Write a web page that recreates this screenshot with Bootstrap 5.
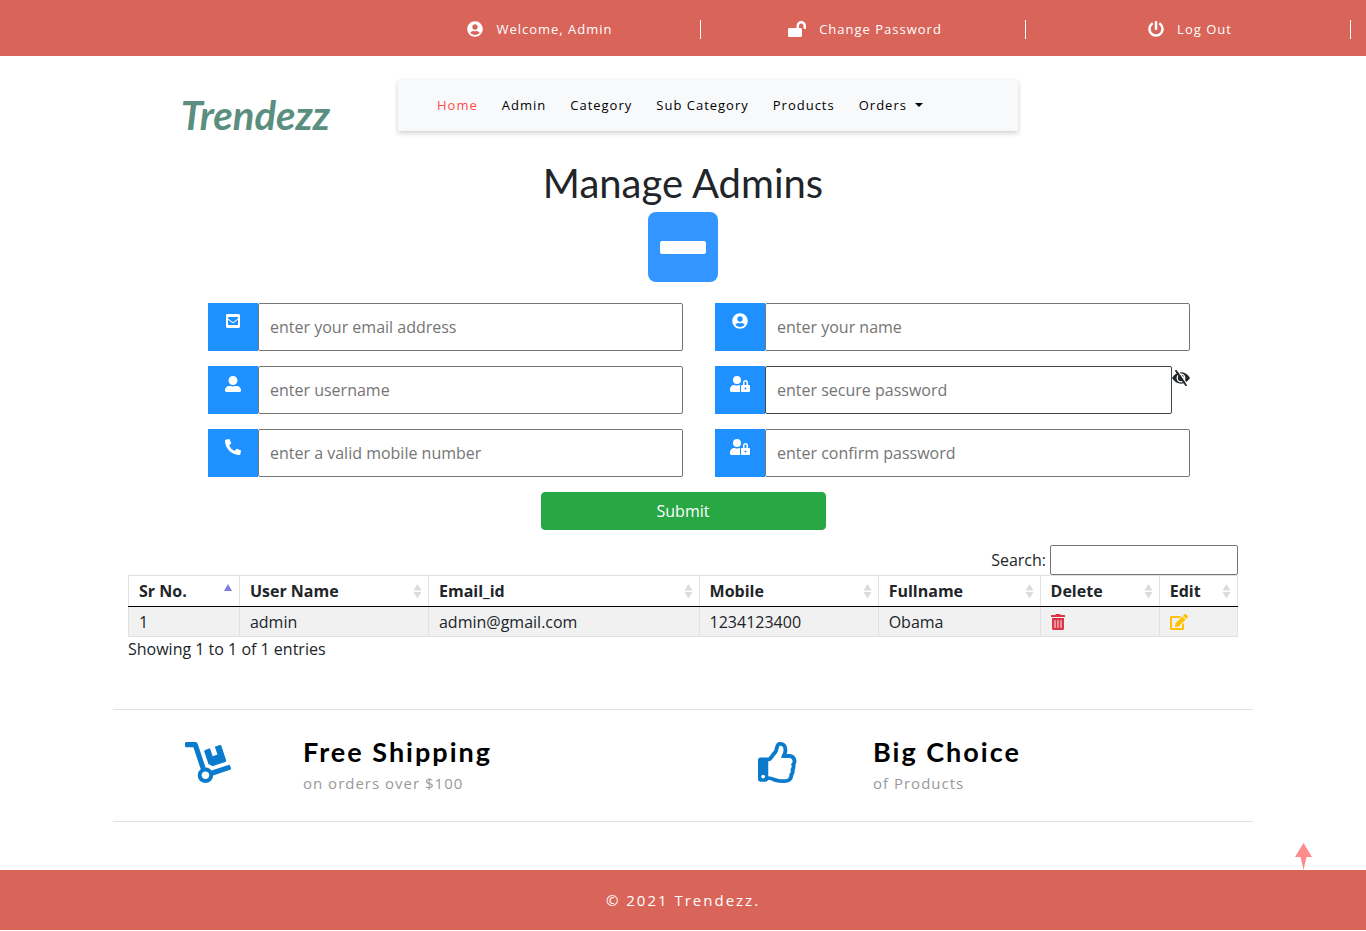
<!DOCTYPE html>
<html lang="en">
<head>
<meta charset="utf-8">
<meta name="viewport" content="width=device-width, initial-scale=1">
<title>Trendezz - Manage Admins</title>
<link rel="stylesheet" href="https://cdn.jsdelivr.net/npm/bootstrap@5.3.0/dist/css/bootstrap.min.css">
<style>
  body { font-family: "Open Sans", sans-serif; font-size: 16px; color: #212529; background: #fff; }
  h1, h2, .brand { font-family: Lato, sans-serif; }
  svg { fill: currentColor; display: block; flex: none; }
  .strip { background: #d96459; }
  .top-strip { padding: 20px 15px 17px 51px; }
  .top-strip .cell { height: 19px; padding-left: 4px; border-right: 1px solid #fff; }
  .top-strip a { font-size: 13px; letter-spacing: 1px; line-height: 19px; font-weight: 500; gap: 13px; }
  .top-strip svg { margin-bottom: 2px; }
  .site-head { margin-top: 24px; }
  .brand { font-size: 40px; font-weight: 700; font-style: italic; line-height: 48px; color: #5a8f80; padding-top: 11px; }
  .menu { max-width: 620px; height: 51px; padding: 0 27px; box-shadow: 0 2px 5px rgba(0,0,0,.2); }
  .menu .nav-link { font-size: 13px; letter-spacing: 1px; color: #000; padding: 0 12px; line-height: 51px; }
  .menu .nav-link.active { color: #ff4c4c; }
  .menu .dropdown-toggle::after { margin-left: 8px; border-width: 4px 4px 0; }
  h1 { font-size: 40px; font-weight: 400; line-height: 48px; margin: 20px 0 5px; }
  .fold { width: 70px; height: 70px; border: 0; border-radius: 8px; background: #3395ff; color: #fff; }
  .admin-form { padding: 21px 63px 0 95px; }
  .admin-form .row { --bs-gutter-x: 32px; --bs-gutter-y: 15px; }
  .tag { width: 50px; height: 48px; padding-top: 10px; background: #1e90ff; color: #fff; }
  .field { height: 48px; min-width: 0; border: 1px solid #767676; border-radius: 2px; padding: 0 11px; }
  .field::placeholder { color: #757575; }
  .field-dark { border-color: #444; }
  .eye { border: 0; background: none; padding: 4px 0 0; color: #212529; }
  .submit { background: #28a745; border-color: #28a745; border-radius: 4px; margin-top: 15px; font-weight: 500; }
  .records { padding: 15px 15px 0; }
  .find { width: 188px; height: 30px; border: 1px solid #767676; border-radius: 2px; }
  .records table { border-collapse: collapse; }
  .records th, .records td { padding: 3px 10px; line-height: 24px; border: 1px solid #dee2e6; }
  .records thead th { border-bottom-color: #000; }
  .records tbody td { background: #f1f1f1; padding-bottom: 2px; }
  .arrows { color: #dcdcdc; margin-right: -5px; }
  .features { margin-top: 48px; border-top: 1px solid #dee2e6; border-bottom: 1px solid #dee2e6; height: 113px; }
  .features .perk { padding-bottom: 2px; }
  .features svg { color: #0a7bcc; margin: 0 auto 4px; }
  .features h2 { font-size: 27px; font-weight: 700; letter-spacing: 2px; line-height: 34px; color: #000; margin: 0; }
  .features p { font-size: 15px; letter-spacing: 1px; line-height: 24px; color: #999; margin: 2px 0 0; }
  .foot { margin-top: 48px; height: 60px; color: #fff; letter-spacing: 2px; font-size: 15px; font-weight: 500; }
  .to-top { right: 54px; bottom: 100%; color: #ff8c8c; }
</style>
</head>
<body>
<header>
  <div class="strip top-strip">
    <div class="row g-0">
      <div class="col-3 offset-3 cell d-flex justify-content-center"><a href="#" class="d-flex align-items-center text-white text-decoration-none"><svg width="16" height="16" viewBox="0 0 496 512"><path d="M248 8C111 8 0 119 0 256s111 248 248 248 248-111 248-248S385 8 248 8zm0 96c48.6 0 88 39.4 88 88s-39.4 88-88 88-88-39.4-88-88 39.4-88 88-88zm0 344c-58.7 0-111.3-26.6-146.5-68.2 18.8-35.4 55.6-59.8 98.5-59.8 2.4 0 4.8.4 7.1 1.1 13 4.2 26.6 6.9 40.9 6.9 14.3 0 28-2.7 40.9-6.9 2.3-.7 4.7-1.1 7.1-1.1 42.9 0 79.7 24.4 98.5 59.8C359.3 421.4 306.7 448 248 448z"/></svg>Welcome, Admin</a></div>
      <div class="col-3 cell d-flex justify-content-center"><a href="#" class="d-flex align-items-center text-white text-decoration-none"><svg width="18" height="16" viewBox="0 0 576 512"><path d="M423.500 0C339.500.3 272 69.500 272 153.500V224H48c-26.500 0-48 21.500-48 48v192c0 26.500 21.500 48 48 48h352c26.500 0 48-21.500 48-48V272c0-26.500-21.500-48-48-48h-48v-71.100c0-39.600 31.700-72.500 71.300-72.900 40-.4 72.700 32.100 72.700 72v80c0 13.300 10.700 24 24 24h32c13.300 0 24-10.700 24-24v-80C576 68 507.500-.3 423.500 0z"/></svg>Change Password</a></div>
      <div class="col-3 cell d-flex justify-content-center"><a href="#" class="d-flex align-items-center text-white text-decoration-none"><svg width="16" height="16" viewBox="0 0 512 512"><path d="M400 54.1c63 45 104 118.6 104 201.9 0 136.8-110.8 247.7-247.5 248C120 504.3 8.2 393 8 256.4 7.9 173.1 48.9 99.3 111.8 54.2c11.7-8.3 28-4.8 35 7.7L162.6 90c5.9 10.5 3.1 23.8-6.6 31-41.5 30.800-68 79.600-68 134.900-.1 92.300 74.500 168.100 168 168.100 91.600 0 168.600-74.200 168-169.100-.3-51.800-24.700-101.800-68.100-134-9.700-7.200-12.400-20.500-6.500-30.900l15.800-28.100c7-12.400 23.200-16.100 34.800-7.800zM296 264V24c0-13.300-10.700-24-24-24h-32c-13.300 0-24 10.700-24 24v240c0 13.300 10.700 24 24 24h32c13.300 0 24-10.700 24-24z"/></svg>Log Out</a></div>
    </div>
  </div>
  <div class="container p-0 site-head">
    <div class="row g-0">
      <div class="col-3 text-center"><a href="#" class="brand d-inline-block text-decoration-none">Trendezz</a></div>
      <div class="col-9">
        <nav class="menu bg-light d-flex" aria-label="Main">
          <ul class="nav flex-nowrap">
            <li class="nav-item"><a class="nav-link active" href="#">Home</a></li>
            <li class="nav-item"><a class="nav-link" href="#">Admin</a></li>
            <li class="nav-item"><a class="nav-link" href="#">Category</a></li>
            <li class="nav-item"><a class="nav-link text-nowrap" href="#">Sub Category</a></li>
            <li class="nav-item"><a class="nav-link" href="#">Products</a></li>
            <li class="nav-item dropdown"><a class="nav-link dropdown-toggle" href="#" role="button" data-bs-toggle="dropdown">Orders</a></li>
          </ul>
        </nav>
      </div>
    </div>
  </div>
</header>

<main class="container p-0">
  <h1 class="text-center">Manage Admins</h1>
  <button type="button" class="fold d-flex align-items-center justify-content-center mx-auto p-0" aria-label="Collapse form"><svg width="46" height="13" viewBox="0 0 46 13"><rect width="46" height="13" rx="2"/></svg></button>

  <form>
    <div class="admin-form">
      <div class="row">
        <div class="col-6 d-flex"><label class="tag d-flex justify-content-center" for="email" aria-label="Email"><svg width="14" height="16" viewBox="0 0 448 512"><path d="M400 32H48C21.49 32 0 53.49 0 80v352c0 26.51 21.49 48 48 48h352c26.51 0 48-21.49 48-48V80c0-26.51-21.49-48-48-48zM178.117 262.104C87.429 196.287 88.353 196.121 64 177.167V152c0-13.255 10.745-24 24-24h272c13.255 0 24 10.745 24 24v25.167c-24.371 18.969-23.434 19.124-114.117 84.938-10.5 7.655-31.392 26.12-45.883 25.894-14.503.218-35.367-18.227-45.883-25.895zM384 217.775V360c0 13.255-10.745 24-24 24H88c-13.255 0-24-10.745-24-24V217.775c13.958 10.794 33.329 25.236 95.303 70.214 14.162 10.341 37.975 32.145 64.697 32.01 26.887.134 51.036-22.041 64.72-32.025 61.958-44.964 81.325-59.406 95.28-70.199z"/></svg></label><input class="field flex-grow-1" id="email" type="email" placeholder="enter your email address"></div>
        <div class="col-6 d-flex"><label class="tag d-flex justify-content-center" for="name" aria-label="Name"><svg width="16" height="16" viewBox="0 0 496 512"><path d="M248 8C111 8 0 119 0 256s111 248 248 248 248-111 248-248S385 8 248 8zm0 96c48.6 0 88 39.4 88 88s-39.4 88-88 88-88-39.4-88-88 39.4-88 88-88zm0 344c-58.7 0-111.3-26.6-146.5-68.2 18.8-35.4 55.6-59.8 98.5-59.8 2.4 0 4.8.4 7.1 1.1 13 4.2 26.6 6.9 40.9 6.9 14.3 0 28-2.7 40.9-6.9 2.3-.7 4.7-1.1 7.1-1.1 42.9 0 79.7 24.4 98.5 59.8C359.3 421.4 306.7 448 248 448z"/></svg></label><input class="field flex-grow-1" id="name" type="text" placeholder="enter your name"></div>
        <div class="col-6 d-flex"><label class="tag d-flex justify-content-center" for="username" aria-label="Username"><svg width="16" height="16" viewBox="0 0 512 512"><path d="M256 288c79.5 0 144-64.5 144-144S335.5 0 256 0 112 64.5 112 144s64.5 144 144 144zm128 32h-55.1c-22.2 10.2-46.9 16-72.9 16s-50.6-5.8-72.9-16H128C57.3 320 0 377.3 0 448v16c0 26.5 21.5 48 48 48h416c26.5 0 48-21.5 48-48v-16c0-70.7-57.3-128-128-128z"/></svg></label><input class="field flex-grow-1" id="username" type="text" placeholder="enter username"></div>
        <div class="col-6 d-flex"><label class="tag d-flex justify-content-center" for="password" aria-label="Password"><svg width="20" height="16" viewBox="0 0 640 512"><path d="M224 256A128 128 0 1 0 96 128a128 128 0 0 0 128 128zm96 64a63.08 63.08 0 0 1 8.1-30.5c-4.8-.5-9.5-1.5-14.5-1.5h-16.7a174.08 174.08 0 0 1-145.8 0h-16.700A134.430 134.430 0 0 0 0 422.400V464a48 48 0 0 0 48 48h280.900a63.540 63.540 0 0 1-8.900-32zm288-32h-32v-80a80 80 0 0 0-160 0v80h-32a32 32 0 0 0-32 32v160a32 32 0 0 0 32 32h224a32 32 0 0 0 32-32V320a32 32 0 0 0-32-32zM496 432a32 32 0 1 1 32-32 32 32 0 0 1-32 32zm32-144h-64v-80a32 32 0 0 1 64 0z"/></svg></label><input class="field field-dark flex-grow-1" id="password" type="password" placeholder="enter secure password"><button type="button" class="eye d-flex align-items-start" aria-label="Show password"><svg width="18" height="16" viewBox="0 0 18 16"><path d="M0 8Q3.500 2.300 9 2.300T18 8Q14.500 13.700 9 13.700T0 8z"/><circle cx="9" cy="8" r="3.800" fill="none" stroke="#fff" stroke-width="1.300"/><path d="M10 5.500a2.500 2.500 0 0 1 1.500 3.500z" fill="#fff"/><path d="M5.600 0L15.600 15" stroke="#fff" stroke-width="1.200"/><path d="M4 .8L14 15.200" stroke="#212529" stroke-width="1.800" stroke-linecap="round"/></svg></button></div>
        <div class="col-6 d-flex"><label class="tag d-flex justify-content-center" for="mobile" aria-label="Mobile number"><svg width="16" height="16" viewBox="0 0 512 512"><path d="M497.39 361.8l-112-48a24 24 0 0 0-28 6.9l-49.6 60.6A370.66 370.66 0 0 1 130.6 204.11l60.6-49.6a23.94 23.94 0 0 0 6.9-28l-48-112A24.16 24.16 0 0 0 122.6.61l-104 24A24 24 0 0 0 0 48c0 256.5 207.9 464 464 464a24 24 0 0 0 23.4-18.6l24-104a24.29 24.29 0 0 0-14.01-27.6z"/></svg></label><input class="field flex-grow-1" id="mobile" type="tel" placeholder="enter a valid mobile number"></div>
        <div class="col-6 d-flex"><label class="tag d-flex justify-content-center" for="confirm" aria-label="Confirm password"><svg width="20" height="16" viewBox="0 0 640 512"><path d="M224 256A128 128 0 1 0 96 128a128 128 0 0 0 128 128zm96 64a63.08 63.08 0 0 1 8.1-30.5c-4.8-.5-9.5-1.5-14.5-1.5h-16.7a174.08 174.08 0 0 1-145.8 0h-16.700A134.430 134.430 0 0 0 0 422.400V464a48 48 0 0 0 48 48h280.900a63.540 63.540 0 0 1-8.900-32zm288-32h-32v-80a80 80 0 0 0-160 0v80h-32a32 32 0 0 0-32 32v160a32 32 0 0 0 32 32h224a32 32 0 0 0 32-32V320a32 32 0 0 0-32-32zM496 432a32 32 0 1 1 32-32 32 32 0 0 1-32 32zm32-144h-64v-80a32 32 0 0 1 64 0z"/></svg></label><input class="field flex-grow-1" id="confirm" type="password" placeholder="enter confirm password"></div>
      </div>
    </div>
    <button type="submit" class="btn btn-success submit w-25 d-block mx-auto">Submit</button>
  </form>

  <section class="records">
    <div class="d-flex justify-content-end align-items-center gap-1"><label for="find">Search:</label><input id="find" class="find" type="search"></div>
    <table class="w-100">
      <colgroup><col style="width:10%"><col style="width:17.05%"><col style="width:24.4%"><col style="width:16.15%"><col style="width:14.6%"><col style="width:10.75%"><col style="width:7.05%"></colgroup>
      <thead>
        <tr>
          <th scope="col"><div class="d-flex justify-content-between align-items-center"><span>Sr No.</span><svg class="arrows" width="10" height="16" viewBox="0 0 10 16"><path fill="#7b80e0" d="M4 1L8 8H0z"/></svg></div></th>
          <th scope="col"><div class="d-flex justify-content-between align-items-center"><span>User Name</span><svg class="arrows" width="10" height="16" viewBox="0 0 10 16"><path d="M4.500 1L8.500 7.500h-8zM.5 9h8l-4 6.500z"/></svg></div></th>
          <th scope="col"><div class="d-flex justify-content-between align-items-center"><span>Email_id</span><svg class="arrows" width="10" height="16" viewBox="0 0 10 16"><path d="M4.500 1L8.500 7.500h-8zM.5 9h8l-4 6.500z"/></svg></div></th>
          <th scope="col"><div class="d-flex justify-content-between align-items-center"><span>Mobile</span><svg class="arrows" width="10" height="16" viewBox="0 0 10 16"><path d="M4.500 1L8.500 7.500h-8zM.5 9h8l-4 6.500z"/></svg></div></th>
          <th scope="col"><div class="d-flex justify-content-between align-items-center"><span>Fullname</span><svg class="arrows" width="10" height="16" viewBox="0 0 10 16"><path d="M4.500 1L8.500 7.500h-8zM.5 9h8l-4 6.500z"/></svg></div></th>
          <th scope="col"><div class="d-flex justify-content-between align-items-center"><span>Delete</span><svg class="arrows" width="10" height="16" viewBox="0 0 10 16"><path d="M4.500 1L8.500 7.500h-8zM.5 9h8l-4 6.500z"/></svg></div></th>
          <th scope="col"><div class="d-flex justify-content-between align-items-center"><span>Edit</span><svg class="arrows" width="10" height="16" viewBox="0 0 10 16"><path d="M4.500 1L8.500 7.500h-8zM.5 9h8l-4 6.500z"/></svg></div></th>
        </tr>
      </thead>
      <tbody>
        <tr>
          <td>1</td><td>admin</td><td>admin@gmail.com</td><td>1234123400</td><td>Obama</td>
          <td><a href="#" class="text-danger" aria-label="Delete admin"><svg width="14" height="16" viewBox="0 0 448 512"><path d="M32 464a48 48 0 0 0 48 48h288a48 48 0 0 0 48-48V128H32zm272-256a16 16 0 0 1 32 0v224a16 16 0 0 1-32 0zm-96 0a16 16 0 0 1 32 0v224a16 16 0 0 1-32 0zm-96 0a16 16 0 0 1 32 0v224a16 16 0 0 1-32 0zM432 32H312l-9.4-18.7A24 24 0 0 0 281.1 0H166.8a23.72 23.72 0 0 0-21.4 13.3L136 32H16A16 16 0 0 0 0 48v32a16 16 0 0 0 16 16h416a16 16 0 0 0 16-16V48a16 16 0 0 0-16-16z"/></svg></a></td>
          <td><a href="#" class="text-warning" aria-label="Edit admin"><svg width="18" height="16" viewBox="0 0 576 512"><path d="M402.6 83.2l90.2 90.2c3.8 3.8 3.8 10 0 13.8L274.4 405.6l-92.8 10.3c-12.4 1.4-22.9-9.1-21.5-21.5l10.3-92.8L388.8 83.2c3.8-3.8 10-3.8 13.8 0zm162-22.900l-48.800-48.800c-15.200-15.200-39.900-15.200-55.200 0l-35.400 35.400c-3.800 3.800-3.800 10 0 13.800l90.200 90.200c3.800 3.800 10 3.800 13.800 0l35.400-35.400c15.200-15.300 15.200-40 0-55.200zM384 346.200V448H64V128h229.800c3.200 0 6.200-1.300 8.500-3.500l40-40c7.600-7.600 2.200-20.500-8.500-20.500H48C21.500 64 0 85.500 0 112v352c0 26.500 21.500 48 48 48h352c26.500 0 48-21.500 48-48V306.200c0-10.700-12.900-16-20.500-8.500l-40 40c-2.200 2.300-3.500 5.300-3.500 8.500z"/></svg></a></td>
        </tr>
      </tbody>
    </table>
    <div>Showing 1 to 1 of 1 entries</div>
  </section>

  <section class="features row gx-0 align-items-center">
    <div class="col-6 perk d-flex align-items-center">
      <div class="col-4"><svg width="46" height="41" viewBox="0 0 576 512"><path d="M294.2 277.7c18 5 34.7 13.4 49.5 24.7l161.5-53.8c8.4-2.8 12.9-11.9 10.1-20.2L454.9 47.2c-2.8-8.4-11.9-12.9-20.2-10.1l-61.1 20.4 33.1 99.4L346 177l-33.1-99.4-61.6 20.5c-8.4 2.8-12.9 11.9-10.1 20.2l53 159.4zm281 48.7L565 296c-2.8-8.4-11.9-12.9-20.2-10.1l-213.5 71.2c-17.2-22-43.6-36.4-73.5-37L158.4 21.9C154 8.8 141.8 0 128 0H16C7.2 0 0 7.2 0 16v32c0 8.8 7.2 16 16 16h88.900l92.200 276.700c-26.100 20.400-41.700 53.600-36 90.500 6.100 39.400 37.900 72.300 77.300 79.200 60.200 10.700 112.300-34.800 113.400-92.600l213.300-71.200c8.300-2.800 12.900-11.800 10.100-20.200zM256 464c-26.500 0-48-21.500-48-48s21.500-48 48-48 48 21.500 48 48-21.500 48-48 48z"/></svg></div>
      <div class="col-8"><h2>Free Shipping</h2><p>on orders over $100</p></div>
    </div>
    <div class="col-6 perk d-flex align-items-center">
      <div class="col-4"><svg width="41" height="41" viewBox="0 0 512 512"><path d="M466.27 286.69C475.04 271.84 480 256 480 236.85c0-44.015-37.218-85.58-85.82-85.58H357.7c4.92-12.81 8.85-28.13 8.85-46.54C366.55 31.936 328.86 0 271.28 0c-61.607 0-58.093 94.933-71.76 108.6-22.747 22.747-49.615 66.447-68.76 83.4H32c-17.673 0-32 14.327-32 32v240c0 17.673 14.327 32 32 32h64c14.893 0 27.408-10.174 30.978-23.95 44.509 1.001 75.06 39.94 177.802 39.94 7.22 0 15.22.01 22.22.01 77.117 0 111.986-39.423 112.94-95.33 13.319-18.425 20.299-43.122 17.34-66.99 9.854-18.452 13.664-40.343 8.99-62.99zm-61.75 53.83c12.56 21.13 1.26 49.41-13.94 57.57 7.7 48.78-17.608 65.9-53.12 65.9h-37.82c-71.639 0-118.029-37.82-171.64-37.82V240h10.92c28.36 0 67.98-70.89 94.54-97.46 28.36-28.36 18.91-75.63 37.82-94.54 47.27 0 47.27 32.98 47.27 56.73 0 39.17-28.36 56.72-28.36 94.54h103.99c21.11 0 37.73 18.91 37.82 37.82.09 18.9-12.82 37.81-22.27 37.81 13.489 14.555 16.371 45.236-5.21 65.62zM88 432c0 13.255-10.745 24-24 24s-24-10.745-24-24 10.745-24 24-24 24 10.745 24 24z"/></svg></div>
      <div class="col-8"><h2>Big Choice</h2><p>of Products</p></div>
    </div>
  </section>
</main>

<footer class="strip foot position-relative d-flex align-items-center justify-content-center">
  <a href="#" class="to-top position-absolute" aria-label="Back to top"><svg width="17" height="27" viewBox="0 0 17 27"><path d="M8.500 0L17 14h-5.500L8.500 27 5.500 14H0z"/></svg></a>
  <span>© 2021 Trendezz.</span>
</footer>
<script src="https://cdn.jsdelivr.net/npm/bootstrap@5.3.0/dist/js/bootstrap.bundle.min.js"></script>
</body>
</html>
